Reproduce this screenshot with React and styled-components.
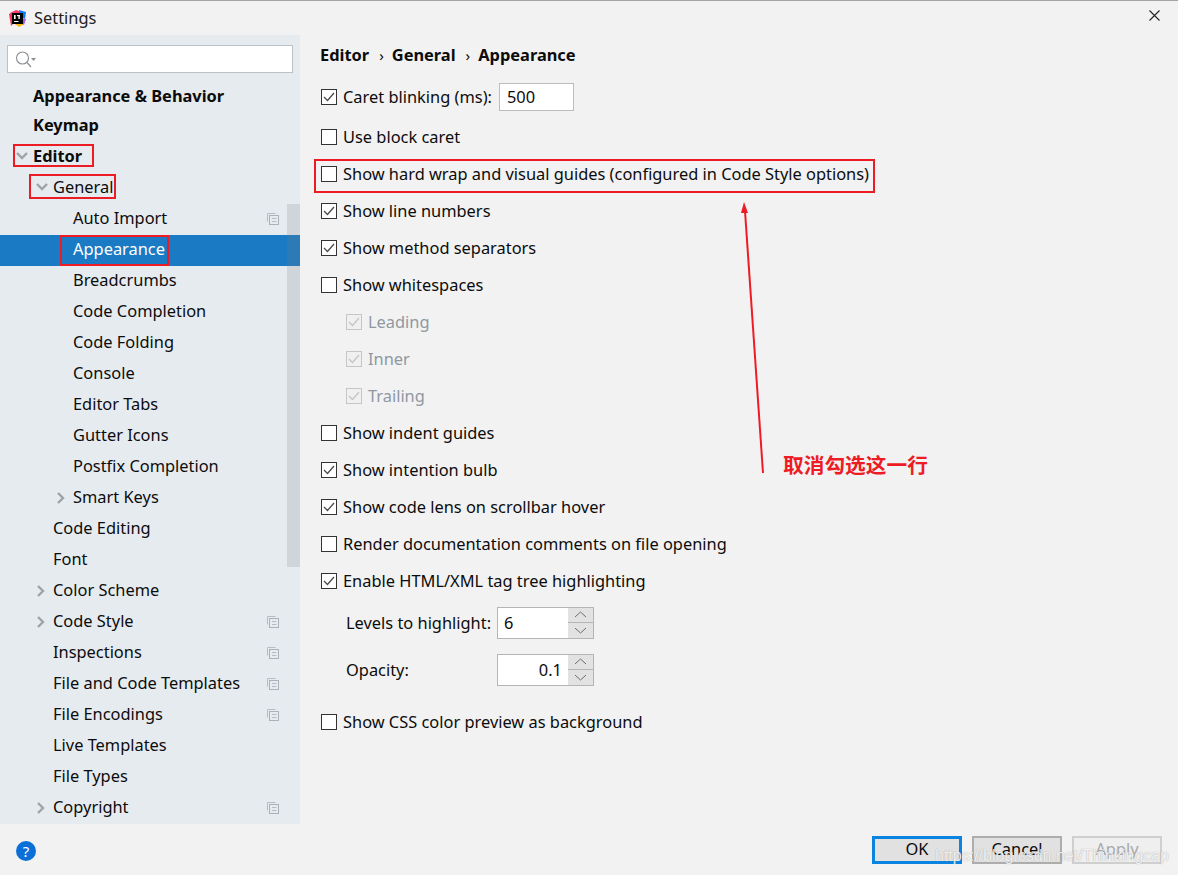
import React from "react";
import styled, { createGlobalStyle } from "styled-components";

const Global = createGlobalStyle`
  html, body { margin: 0; padding: 0; background: #f2f2f2; }
  body { font-family: "Noto Sans", "Open Sans", sans-serif; font-size: 16.4px; color: #0c0c0c; }
`;

const Window = styled.div`
  position: relative;
  width: 1178px;
  height: 875px;
  overflow: hidden;
  display: flex;
  flex-direction: column;
  border-top: 1px solid #a3a3a3;
  box-sizing: border-box;
`;

const TitleBar = styled.div`
  height: 34px;
  flex: none;
  display: flex;
  align-items: center;
  padding: 0 18px 2px 9px;
  box-sizing: border-box;
  gap: 8px;
`;

const Title = styled.span`
  flex: 1;
  color: #222;
`;

const LogoSvg = styled.svg`
  margin-top: 2px;
`;

const CloseSvg = styled.svg`
  margin-bottom: 4px;
`;

const Body = styled.div`
  flex: 1;
  display: flex;
  min-height: 0;
`;

const Sidebar = styled.nav`
  position: relative;
  width: 300px;
  flex: none;
  background: #e6ebf0;
  padding-top: 10px;
  box-sizing: border-box;
  overflow: hidden;
`;

const Search = styled.div`
  height: 28px;
  margin: 0 7px 9px 7px;
  background: #fff;
  border: 1px solid #bcc1c5;
  box-sizing: border-box;
  display: flex;
  align-items: center;
  padding-left: 7px;
`;

const TreeRow = styled.div`
  height: 31px;
  box-sizing: border-box;
  padding-bottom: 5px;
  display: flex;
  align-items: center;
  padding-left: ${(p) => 33 + p.$depth * 20}px;
  position: relative;
  font-weight: ${(p) => (p.$bold ? 700 : 400)};
  background: ${(p) => (p.$selected ? "#1a7ac4" : "transparent")};
  color: ${(p) => (p.$selected ? "#fff" : "#0c0c0c")};
  margin-top: ${(p) => p.$shift || 0}px;
`;

const Arrow = styled.svg`
  position: absolute;
  left: ${(p) => 16 + p.$depth * 20}px;
  top: ${(p) => (p.$open ? 7 : 9)}px;
`;

const CopyIcon = styled.svg`
  position: absolute;
  right: 21px;
  top: 9px;
`;

const Scroll = styled.div`
  position: absolute;
  left: 287px;
  top: 169px;
  width: 13px;
  height: 363px;
  background: rgba(120, 125, 130, 0.2);
`;

const Content = styled.main`
  flex: 1;
  padding: 6px 0 0 21px;
`;

const Crumbs = styled.div`
  height: 27px;
  display: flex;
  align-items: center;
  font-weight: 700;
  margin-left: -1px;
  margin-bottom: 10px;
`;

const Sep = styled.span`
  font-weight: 400;
  margin: 0 8px 0 10px;
  font-size: 15px;
`;

const OptionRow = styled.div`
  height: 37px;
  display: flex;
  align-items: center;
  gap: 6px;
  margin-top: ${(p) => p.$top || 0}px;
  padding-left: ${(p) => p.$indent || 0}px;
  color: ${(p) => (p.$disabled ? "#8f98a2" : "inherit")};
`;

const Box = styled.span`
  width: 16px;
  height: 16px;
  flex: none;
  box-sizing: border-box;
  border: 1px solid ${(p) => (p.$disabled ? "#c6c6c6" : "#333")};
  background: ${(p) => (p.$disabled ? "#f0f0f0" : "#fff")};
  display: flex;
  align-items: center;
  justify-content: center;
`;

const NumberInput = styled.div`
  width: 75px;
  height: 28px;
  margin-left: 1px;
  box-sizing: border-box;
  background: #fff;
  border: 1px solid #bdbdbd;
  padding-left: 7px;
  display: flex;
  align-items: center;
`;

const SpinLabel = styled.span`
  width: 148px;
  padding-left: 25px;
  flex: none;
`;

const Spinner = styled.div`
  width: 97px;
  height: 32px;
  margin-left: -3px;
  box-sizing: border-box;
  border: 1px solid #b5b5b5;
  background: #fff;
  display: flex;
`;

const SpinValue = styled.div`
  flex: 1;
  display: flex;
  align-items: center;
  padding: 0 6px;
  justify-content: ${(p) => (p.$right ? "flex-end" : "flex-start")};
`;

const SpinButtons = styled.div`
  width: 25px;
  display: flex;
  flex-direction: column;
  background: #e2e2e2;
`;

const SpinButton = styled.div`
  flex: 1;
  display: flex;
  align-items: center;
  justify-content: center;
  border-top: ${(p) => (p.$down ? "1px solid #b5b5b5" : "none")};
`;

const Footer = styled.footer`
  height: 51px;
  flex: none;
  display: flex;
  align-items: center;
  padding: 0 16px;
  gap: 10px;
  box-sizing: border-box;
`;

const Help = styled.div`
  width: 20px;
  height: 20px;
  margin-top: 2px;
  border-radius: 50%;
  background: #0a6fd6;
  color: #fff;
  display: flex;
  align-items: center;
  justify-content: center;
  font-size: 15px;
  margin-right: auto;
`;

const Button = styled.button`
  width: 90px;
  height: 28px;
  box-sizing: border-box;
  font: inherit;
  line-height: 18px;
  padding: 0 0 2px;
  background: ${(p) => (p.$disabled ? "#efefef" : "#e1e1e1")};
  color: ${(p) => (p.$disabled ? "#a8a8a8" : "#0c0c0c")};
  border: ${(p) => (p.$primary ? "3px solid #0a84e0" : p.$disabled ? "2px solid #cfcfcf" : "2px solid #adadad")};
`;

const RedBox = styled.div`
  position: absolute;
  box-sizing: border-box;
  border: 2px solid #ed1c24;
  left: ${(p) => p.$x}px;
  top: ${(p) => p.$y}px;
  width: ${(p) => p.$w}px;
  height: ${(p) => p.$h}px;
`;

const ArrowLayer = styled.svg`
  position: absolute;
  left: 730px;
  top: 190px;
`;

const Note = styled.div`
  position: absolute;
  left: 783px;
  top: 448px;
  color: #ed1c24;
  font-family: "Noto Sans CJK SC", sans-serif;
  font-weight: 700;
  font-size: 20.7px;
  line-height: 30px;
`;

const Watermark = styled.div`
  position: absolute;
  left: 935px;
  top: 844px;
  color: rgba(255, 255, 255, 0.85);
  text-shadow: 0 0 1px rgba(120, 120, 120, 0.7);
  font-family: "Liberation Sans", sans-serif;
  font-size: 16px;
  line-height: 22px;
`;

const tree = [
  { label: "Appearance & Behavior", depth: 0, bold: true },
  { label: "Keymap", depth: 0, bold: true, shift: -2 },
  { label: "Editor", depth: 0, bold: true, open: true },
  { label: "General", depth: 1, open: true },
  { label: "Auto Import", depth: 2, copy: true },
  { label: "Appearance", depth: 2, selected: true },
  { label: "Breadcrumbs", depth: 2 },
  { label: "Code Completion", depth: 2 },
  { label: "Code Folding", depth: 2 },
  { label: "Console", depth: 2 },
  { label: "Editor Tabs", depth: 2 },
  { label: "Gutter Icons", depth: 2 },
  { label: "Postfix Completion", depth: 2 },
  { label: "Smart Keys", depth: 2, closed: true },
  { label: "Code Editing", depth: 1 },
  { label: "Font", depth: 1 },
  { label: "Color Scheme", depth: 1, closed: true },
  { label: "Code Style", depth: 1, closed: true, copy: true },
  { label: "Inspections", depth: 1, copy: true },
  { label: "File and Code Templates", depth: 1, copy: true },
  { label: "File Encodings", depth: 1, copy: true },
  { label: "Live Templates", depth: 1 },
  { label: "File Types", depth: 1 },
  { label: "Copyright", depth: 1, closed: true, copy: true },
];

const options = [
  { label: "Show hard wrap and visual guides (configured in Code Style options)" },
  { label: "Show line numbers", checked: true },
  { label: "Show method separators", checked: true },
  { label: "Show whitespaces" },
  { label: "Leading", checked: true, sub: true },
  { label: "Inner", checked: true, sub: true },
  { label: "Trailing", checked: true, sub: true },
  { label: "Show indent guides" },
  { label: "Show intention bulb", checked: true },
  { label: "Show code lens on scrollbar hover", checked: true },
  { label: "Render documentation comments on file opening" },
  { label: "Enable HTML/XML tag tree highlighting", checked: true },
];

const Logo = () => (
  <LogoSvg width="17" height="17" viewBox="0 0 17 17">
    <path d="M1 3 L7 0 L13 2 L9 8 Z" fill="#fc3a6e" />
    <path d="M0 4 L4 2 L6 12 L2 16 Z" fill="#fe315d" />
    <path d="M10 0 L17 2 L16 9 L11 6 Z" fill="#087cfa" />
    <path d="M3 12 L10 17 L15 14 L8 10 Z" fill="#fdb60d" />
    <path d="M13 8 L17 9 L15 15 L12 13 Z" fill="#a45ee5" />
    <rect x="3" y="3" width="11" height="11" fill="#000" />
    <rect x="5" y="5" width="1.6" height="4" fill="#fff" />
    <rect x="8" y="5" width="3" height="1.2" fill="#fff" />
    <rect x="9.4" y="5" width="1.4" height="4" fill="#fff" />
    <rect x="5" y="11" width="4.5" height="1" fill="#fff" />
  </LogoSvg>
);

const Close = () => (
  <CloseSvg width="11" height="11" viewBox="0 0 11 11">
    <path d="M0.5 0.5 L10.5 10.5 M10.5 0.5 L0.5 10.5" stroke="#222" strokeWidth="1.1" fill="none" />
  </CloseSvg>
);

const SearchIcon = () => (
  <svg width="22" height="17" viewBox="0 0 22 17">
    <circle cx="7.5" cy="7" r="6" fill="none" stroke="#8a8f94" strokeWidth="1.1" />
    <path d="M12 11.5 L16 16" stroke="#8a8f94" strokeWidth="1.2" />
    <path d="M16 7 L21 7 L18.5 10 Z" fill="#8a8f94" />
  </svg>
);

const Chevron = ({ open, depth }) => (
  <Arrow $depth={depth} $open={open} width="12" height="12" viewBox="0 0 12 12">
    <path
      d={open ? "M1 4 L6 9 L11 4" : "M2 1 L7 6 L2 11"}
      fill="none"
      stroke="#a0a3a6"
      strokeWidth="2.4"
    />
  </Arrow>
);

const Copy = () => (
  <CopyIcon width="12" height="12" viewBox="0 0 12 12">
    <path d="M0.5 8.5 V0.5 H8.5" fill="none" stroke="#b5bcc4" strokeWidth="1" />
    <rect x="2.5" y="2.5" width="9" height="9" fill="#e6ebf0" stroke="#a9b1ba" strokeWidth="1" />
    <path d="M5 5.5 H9.5 M5 8.5 H9.5" stroke="#b5bcc4" strokeWidth="1" />
  </CopyIcon>
);

const Check = ({ disabled }) => (
  <svg width="12" height="10" viewBox="0 0 12 10">
    <path
      d="M1 5 L4.5 8.5 L11 1"
      fill="none"
      stroke={disabled ? "#c4c4c4" : "#4a4a4a"}
      strokeWidth="1.3"
    />
  </svg>
);

const CheckBox = ({ checked, disabled }) => (
  <Box $disabled={disabled}>{checked && <Check disabled={disabled} />}</Box>
);

const Caret = ({ down }) => (
  <svg width="13" height="7" viewBox="0 0 13 7">
    <path d={down ? "M1 1 L6.5 6 L12 1" : "M1 6 L6.5 1 L12 6"} fill="none" stroke="#6d6d6d" strokeWidth="1" />
  </svg>
);

const NumberSpinner = ({ label, value, right }) => (
  <>
    <SpinLabel>{label}</SpinLabel>
    <Spinner>
      <SpinValue $right={right}>{value}</SpinValue>
      <SpinButtons>
        <SpinButton><Caret /></SpinButton>
        <SpinButton $down><Caret down /></SpinButton>
      </SpinButtons>
    </Spinner>
  </>
);

export default function App() {
  return (
    <Window>
      <Global />
      <TitleBar>
        <Logo />
        <Title>Settings</Title>
        <Close />
      </TitleBar>
      <Body>
        <Sidebar>
          <Search><SearchIcon /></Search>
          {tree.map((t) => (
            <TreeRow key={t.label} $depth={t.depth} $bold={t.bold} $selected={t.selected} $shift={t.shift}>
              {(t.open || t.closed) && <Chevron open={t.open} depth={t.depth} />}
              {t.label}
              {t.copy && <Copy />}
            </TreeRow>
          ))}
          <Scroll />
        </Sidebar>
        <Content>
          <Crumbs>
            Editor<Sep>›</Sep>General<Sep>›</Sep>Appearance
          </Crumbs>
          <OptionRow>
            <CheckBox checked />
            Caret blinking (ms):
            <NumberInput>500</NumberInput>
          </OptionRow>
          <OptionRow $top={3}>
            <CheckBox />
            Use block caret
          </OptionRow>
          {options.map((o) => (
            <OptionRow key={o.label} $indent={o.sub ? 25 : 0} $disabled={o.sub}>
              <CheckBox checked={o.checked} disabled={o.sub} />
              {o.label}
            </OptionRow>
          ))}
          <OptionRow $top={5}>
            <NumberSpinner label="Levels to highlight:" value="6" />
          </OptionRow>
          <OptionRow $top={10}>
            <NumberSpinner label="Opacity:" value="0.1" right />
          </OptionRow>
          <OptionRow $top={15}>
            <CheckBox />
            Show CSS color preview as background
          </OptionRow>
        </Content>
      </Body>
      <Footer>
        <Help>?</Help>
        <Button $primary>OK</Button>
        <Button>Cancel</Button>
        <Button $disabled>Apply</Button>
      </Footer>
      <RedBox $x={13} $y={143} $w={81} $h={23} />
      <RedBox $x={29} $y={173} $w={87} $h={25} />
      <RedBox $x={60} $y={234} $w={109} $h={31} />
      <RedBox $x={314} $y={158} $w={561} $h={34} />
      <ArrowLayer width="50" height="300" viewBox="0 0 50 300">
        <path d="M33 282 L15 20" stroke="#ed1c24" strokeWidth="2" fill="none" />
        <path d="M14 11 L18 22 L11 22 Z" fill="#ed1c24" />
      </ArrowLayer>
      <Note>取消勾选这一行</Note>
      <Watermark>https://blog.csdn.net/Thinkingcap</Watermark>
    </Window>
  );
}
